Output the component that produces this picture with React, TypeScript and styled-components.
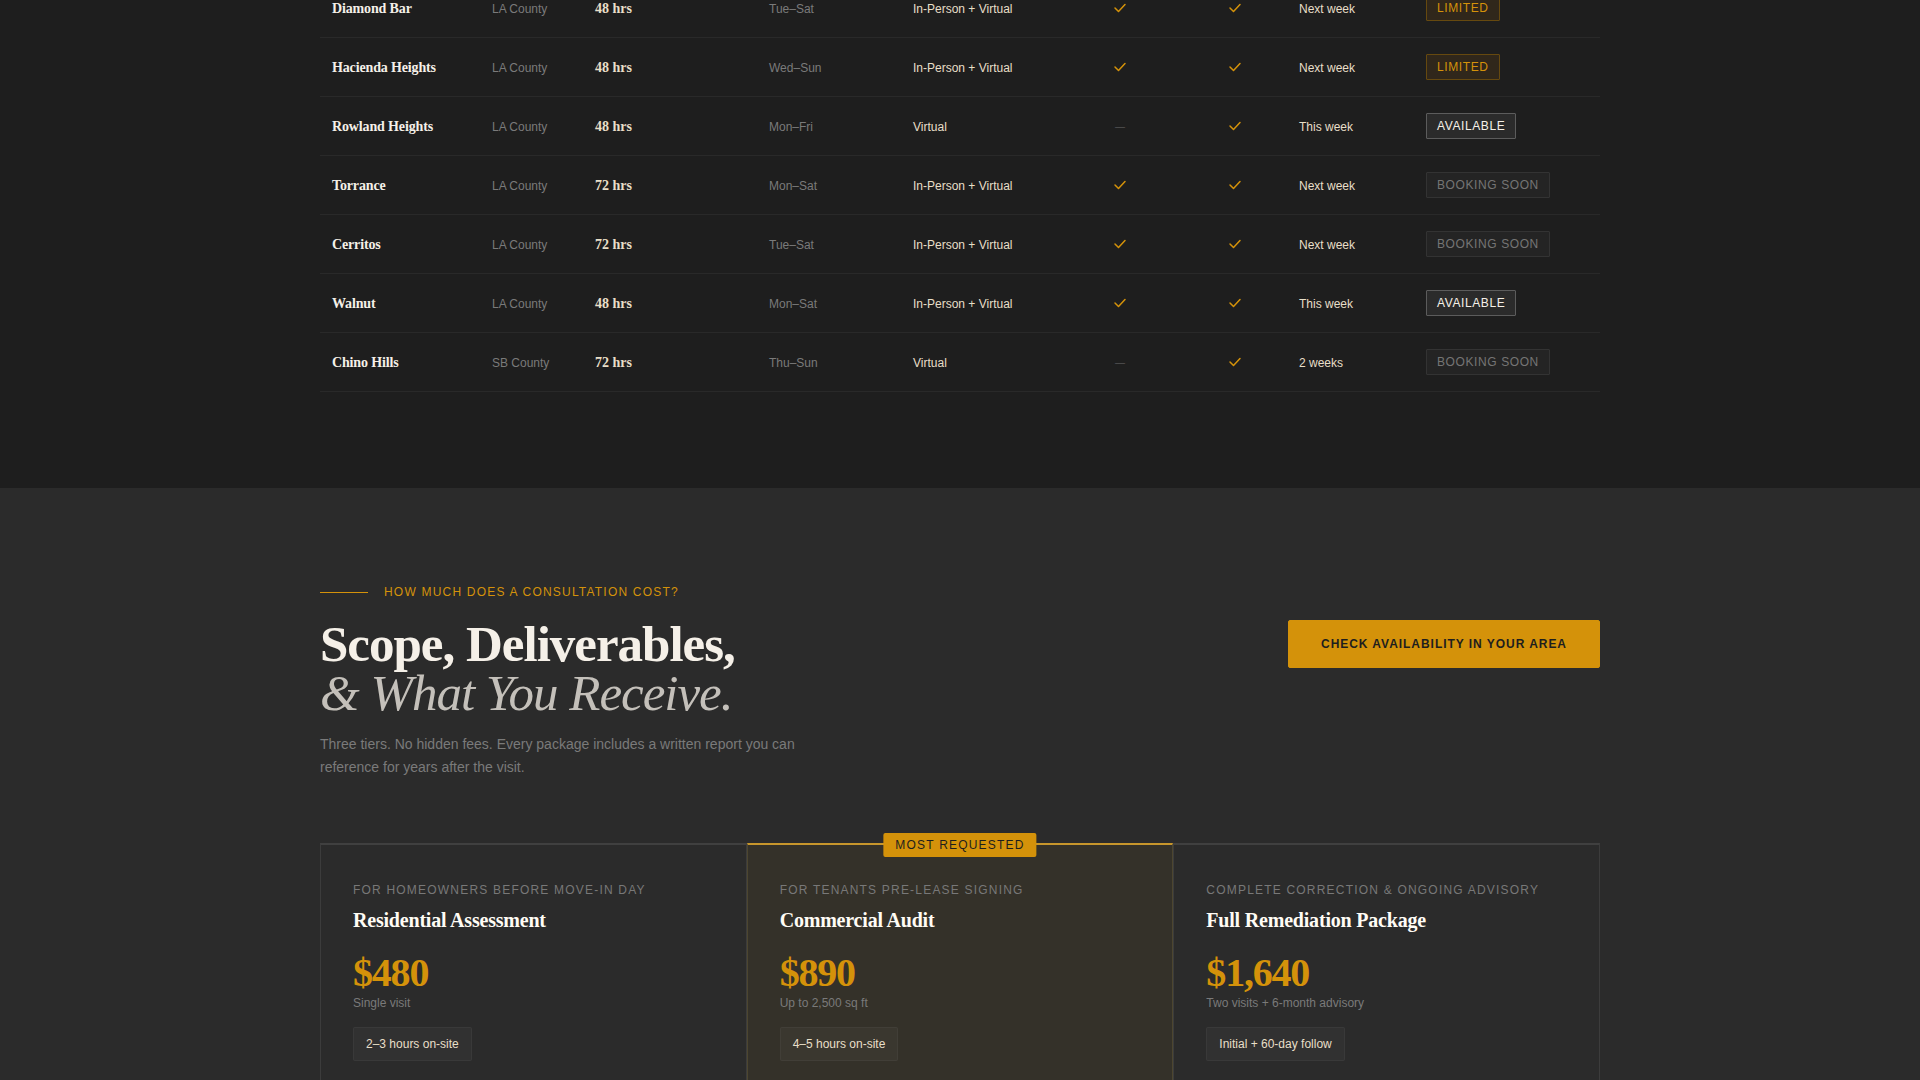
import React from "react";
import styled, { createGlobalStyle, css } from "styled-components";

const sans = `"Liberation Sans", Arial, sans-serif`;
const serif = `"Liberation Serif", "Times New Roman", serif`;

const GlobalStyle = createGlobalStyle`
  *, *::before, *::after { box-sizing: border-box; }
  body { margin: 0; background: #2b2b2b; color: #f5f0e8; font: 12px/18px ${sans}; }
  h2, h3, p { margin: 0; }
`;

const Page = styled.main`
  height: 100vh;
  overflow: hidden;
`;

const Section = styled.section<{ $tone: "dark" | "light" }>`
  display: flow-root;
  padding: ${(p) => (p.$tone === "dark" ? "0 32px 96px" : "96px 32px")};
  background: ${(p) => (p.$tone === "dark" ? "#1e1e1e" : "#2b2b2b")};
`;

const Container = styled.div`
  max-width: 1280px;
  margin: 0 auto;
`;

const Table = styled.table`
  width: 100%;
  margin-top: -21px;
  table-layout: fixed;
  border-collapse: separate;
  border-spacing: 0;
`;

const Row = styled.tr`
  height: 59px;
`;

const Cell = styled.td<{ $muted?: boolean }>`
  padding: 2px 12px 0;
  border-bottom: 1px solid #292929;
  color: ${(p) => (p.$muted ? "#7a7a7a" : "#e8dfc8")};
  vertical-align: middle;
`;

const MarkCell = styled(Cell)`
  padding: 0 12px;
  text-align: center;
`;

const BadgeCell = styled(Cell)`
  padding: 0 12px;
`;

const City = styled.th`
  padding: 2px 12px 0;
  border-bottom: 1px solid #292929;
  color: #f5f0e8;
  font: bold 14px/18px ${serif};
  letter-spacing: -0.01em;
  text-align: left;
`;

const Response = styled.span`
  font: bold 14px/18px ${serif};
`;

const Dash = styled.span`
  display: block;
  padding-top: 2px;
  color: #6b6b6b;
  font: 10px/18px ${serif};
`;

const CheckIcon = styled.svg`
  display: block;
  margin: 0 auto;
`;

const Badge = styled.span<{ $status: Status }>`
  display: inline-block;
  padding: 3px 10px;
  border: 1px solid;
  border-radius: 1px;
  letter-spacing: 0.05em;
  text-transform: uppercase;
  ${(p) =>
    p.$status === "Limited"
      ? css`color: #d4920a; background: #30271b; border-color: #66490f;`
      : p.$status === "Available"
      ? css`color: #f5f0e8; background: #2b2b2b; border-color: #5c5c5c;`
      : css`color: #757575; background: #242424; border-color: #333;`}
`;

const Eyebrow = styled.p`
  display: flex;
  align-items: center;
  gap: 16px;
  margin-bottom: 20px;
  color: #d4920a;
  line-height: 16px;
  letter-spacing: 0.1em;
  text-transform: uppercase;
  &::before { content: ""; width: 48px; height: 1px; background: #d4920a; }
`;

const Header = styled.header`
  display: flex;
  justify-content: space-between;
  align-items: flex-start;
  gap: 32px;
  margin-bottom: 64px;
`;

const Heading = styled.h2`
  margin-bottom: 15px;
  color: #f5f0e8;
  font: bold 51px/49px ${serif};
  letter-spacing: -1px;
  em { display: block; color: #c4c0ba; font-weight: normal; }
`;

const Lead = styled.p`
  max-width: 480px;
  color: #7a7a7a;
  font-size: 14px;
  line-height: 23px;
`;

const Cta = styled.button`
  padding: 15px 32px;
  border: 1px solid #d4920a;
  border-radius: 2px;
  background: #d4920a;
  color: #1e1e1e;
  font: bold 12px/16px ${sans};
  letter-spacing: 0.08em;
  text-transform: uppercase;
  white-space: nowrap;
  cursor: pointer;
`;

const Tiers = styled.div`
  display: grid;
  grid-template-columns: repeat(3, 1fr);
`;

const Tier = styled.article<{ $featured?: boolean }>`
  position: relative;
  min-height: 480px;
  padding: 36px 32px;
  border: 1px solid ${(p) => (p.$featured ? "#4d4630" : "#3c3c3c")};
  border-top: 2px solid ${(p) => (p.$featured ? "#c7962c" : "#404040")};
  background: ${(p) => (p.$featured ? "#343129" : "transparent")};
`;

const Ribbon = styled.span`
  position: absolute;
  top: -12px;
  left: 50%;
  transform: translateX(-50%);
  padding: 3px 12px;
  border-radius: 2px;
  background: #d4920a;
  color: #1e1e1e;
  letter-spacing: 0.1em;
  text-transform: uppercase;
  white-space: nowrap;
`;

const Audience = styled.p`
  margin-bottom: 8px;
  color: #787878;
  letter-spacing: 0.1em;
  text-transform: uppercase;
`;

const TierName = styled.h3`
  margin-bottom: 20px;
  color: #fffcf5;
  font: bold 20px/26px ${serif};
  letter-spacing: -0.01em;
`;

const Price = styled.p`
  color: #d4920a;
  font: bold 40px/40px ${serif};
  letter-spacing: -0.03em;
`;

const Note = styled.p`
  margin-bottom: 14px;
  color: #7a7a7a;
  line-height: 20px;
`;

const Duration = styled.span`
  display: inline-block;
  padding: 7px 12px;
  border: 1px solid rgba(255, 255, 255, 0.04);
  border-radius: 2px;
  background: rgba(255, 255, 255, 0.03);
  color: #e8dfc8;
`;

type Status = "Limited" | "Available" | "Booking Soon";

interface Area {
  city: string;
  county: string;
  response: string;
  days: string;
  format: string;
  onSite: boolean;
  next: string;
  status: Status;
}

const columnWidths = [160, 103, 174, 144, 156, 126, 104, 127, 186];

const both = "In-Person + Virtual";

const areas: Area[] = [
  { city: "Diamond Bar", county: "LA County", response: "48 hrs", days: "Tue–Sat", format: both, onSite: true, next: "Next week", status: "Limited" },
  { city: "Hacienda Heights", county: "LA County", response: "48 hrs", days: "Wed–Sun", format: both, onSite: true, next: "Next week", status: "Limited" },
  { city: "Rowland Heights", county: "LA County", response: "48 hrs", days: "Mon–Fri", format: "Virtual", onSite: false, next: "This week", status: "Available" },
  { city: "Torrance", county: "LA County", response: "72 hrs", days: "Mon–Sat", format: both, onSite: true, next: "Next week", status: "Booking Soon" },
  { city: "Cerritos", county: "LA County", response: "72 hrs", days: "Tue–Sat", format: both, onSite: true, next: "Next week", status: "Booking Soon" },
  { city: "Walnut", county: "LA County", response: "48 hrs", days: "Mon–Sat", format: both, onSite: true, next: "This week", status: "Available" },
  { city: "Chino Hills", county: "SB County", response: "72 hrs", days: "Thu–Sun", format: "Virtual", onSite: false, next: "2 weeks", status: "Booking Soon" },
];

const tiers = [
  { audience: "For homeowners before move-in day", name: "Residential Assessment", price: "$480", note: "Single visit", duration: "2–3 hours on-site" },
  { audience: "For tenants pre-lease signing", name: "Commercial Audit", price: "$890", note: "Up to 2,500 sq ft", duration: "4–5 hours on-site", featured: true },
  { audience: "Complete correction & ongoing advisory", name: "Full Remediation Package", price: "$1,640", note: "Two visits + 6-month advisory", duration: "Initial + 60-day follow" },
];

const Check = () => (
  <CheckIcon width="14" height="14" viewBox="0 0 14 14" fill="none" role="img" aria-label="Yes">
    <path d="M2 7l3.5 3.5L12 3.5" stroke="#d4920a" strokeWidth="1.5" strokeLinecap="round" strokeLinejoin="round" />
  </CheckIcon>
);

export default function App() {
  return (
    <>
      <GlobalStyle />
      <Page>
        <Section $tone="dark">
          <Container>
            <Table>
              <colgroup>
                {columnWidths.map((width, i) => (
                  <col key={i} width={width} />
                ))}
              </colgroup>
              <tbody>
                {areas.map((a) => (
                  <Row key={a.city}>
                    <City scope="row">{a.city}</City>
                    <Cell $muted>{a.county}</Cell>
                    <Cell><Response>{a.response}</Response></Cell>
                    <Cell $muted>{a.days}</Cell>
                    <Cell>{a.format}</Cell>
                    <MarkCell>{a.onSite ? <Check /> : <Dash>—</Dash>}</MarkCell>
                    <MarkCell><Check /></MarkCell>
                    <Cell>{a.next}</Cell>
                    <BadgeCell><Badge $status={a.status}>{a.status}</Badge></BadgeCell>
                  </Row>
                ))}
              </tbody>
            </Table>
          </Container>
        </Section>
        <Section $tone="light">
          <Container>
            <Eyebrow>How much does a consultation cost?</Eyebrow>
            <Header>
              <div>
                <Heading>
                  Scope, Deliverables, <em>&amp; What You Receive.</em>
                </Heading>
                <Lead>
                  Three tiers. No hidden fees. Every package includes a written report you can reference for years after the visit.
                </Lead>
              </div>
              <Cta type="button">Check availability in your area</Cta>
            </Header>
            <Tiers>
              {tiers.map((t) => (
                <Tier key={t.name} $featured={t.featured}>
                  {t.featured && <Ribbon>Most requested</Ribbon>}
                  <Audience>{t.audience}</Audience>
                  <TierName>{t.name}</TierName>
                  <Price>{t.price}</Price>
                  <Note>{t.note}</Note>
                  <Duration>{t.duration}</Duration>
                </Tier>
              ))}
            </Tiers>
          </Container>
        </Section>
      </Page>
    </>
  );
}
